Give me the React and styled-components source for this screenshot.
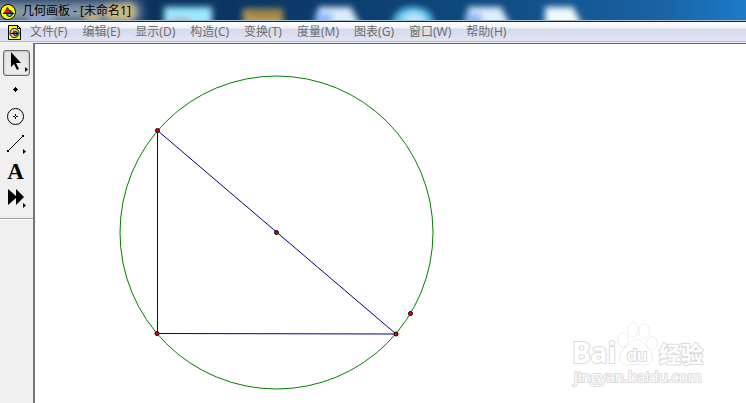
import { useState } from "react";
import styled, { createGlobalStyle } from "styled-components";

const GlobalStyle = createGlobalStyle`
  * {
    box-sizing: border-box;
  }

  body {
    margin: 0;
    font-family: "Noto Sans", "Noto Sans CJK SC", sans-serif;
    font-size: 12px;
  }
`;

const Window = styled.div`
  display: flex;
  flex-direction: column;
  min-height: 100vh;
  background: white;
`;

const TitleBar = styled.header`
  position: relative;
  display: flex;
  align-items: center;
  gap: 5px;
  height: 22px;
  overflow: hidden;
  background: linear-gradient(90deg, #0c2d55 0%, #0b3765 35%, #0f4a80 65%, #1a62a4 88%, #1e7ac6 100%);
  border-bottom: 1px solid #16263e;
  box-shadow: inset 0 -1px #a9bfd4;
`;

const Backdrop = styled.svg`
  position: absolute;
  top: 0;
  left: 0;
`;

const TitleIcon = styled.svg`
  position: relative;
  width: 17px;
  height: 20px;
`;

const Title = styled.h1`
  position: relative;
  margin: 0;
  font-size: 12px;
  font-weight: 400;
  line-height: 20px;
  color: black;
`;

const MenuBar = styled.nav`
  display: flex;
  align-items: center;
  gap: 1px;
  height: 21px;
  padding-left: 7px;
  background: linear-gradient(#fdfdfe 0, #f0f2f8 6px, #d5daeb 7px, #dfe3f4 18px);
  border-bottom: 1px solid #f1f1f1;
  box-shadow: inset 0 -1px #b6bccc;
`;

const MenuIcon = styled.svg`
  width: 15px;
  height: 17px;
`;

const MenuButton = styled.button`
  padding: 0 7px;
  border: none;
  background: none;
  font: inherit;
  line-height: 18px;
  color: #6d6d6d;
  white-space: nowrap;

  &:hover {
    color: black;
  }
`;

const Workspace = styled.main`
  display: flex;
  flex: 1;
`;

const Toolbox = styled.aside`
  width: 33px;
  background: #f0f0f0;
`;

const ToolList = styled.div`
  display: flex;
  flex-direction: column;
  align-items: flex-start;
  gap: 1px;
  padding: 7px 3px;
  border-bottom: 1px solid #a0a0a0;
  box-shadow: 0 1px white;
`;

const ToolButton = styled.button`
  width: 27px;
  height: 26px;
  padding: 0;
  border: 1px solid ${(props) => (props.$active ? "#686868" : "transparent")};
  border-radius: 3px;
  background: ${(props) => (props.$active ? "linear-gradient(#e2e2e2, #efefef)" : "none")};
  box-shadow: ${(props) => (props.$active ? "inset 0 0 2px #8a8a8a" : "none")};

  svg {
    display: block;
    overflow: visible;
  }
`;

const Sketch = styled.section`
  position: relative;
  flex: 1;
  border-top: 1px solid #646464;
  border-left: 2px solid #747474;
  background: white;
`;

const Drawing = styled.svg`
  display: block;
  width: 100%;
  height: 350px;
`;

const Watermark = styled.svg`
  position: absolute;
  right: 36px;
  bottom: 12px;
  width: 140px;
  height: 72px;
  font-family: "Open Sans", "Noto Sans CJK SC", sans-serif;
  fill: white;
  stroke: #dadada;
  paint-order: stroke;
`;

const menus = [
  "文件(F)",
  "编辑(E)",
  "显示(D)",
  "构造(C)",
  "变换(T)",
  "度量(M)",
  "图表(G)",
  "窗口(W)",
  "帮助(H)",
];

const tools = [
  {
    name: "选择箭头工具",
    icon: (
      <>
        <path d="M7 1v15l3-3 3 6 2-1-3-6h5z" />
        <path d="M21 16v5l3-2.500z" />
      </>
    ),
  },
  { name: "点工具", icon: <path d="M11 9h1v1h1v1h1v1h-1v1h-1v1h-1v-1h-1v-1h-1v-1h1v-1h1z" /> },
  {
    name: "圆规工具",
    icon: (
      <g fill="none" stroke="black">
        <circle cx="11.500" cy="11.500" r="8" />
        <path d="M9 11.500h2M12 11.500h2M11.500 9v2M11.500 12v2" />
      </g>
    ),
  },
  {
    name: "线段直尺工具",
    icon: (
      <>
        <path d="M4 19L19 4" stroke="black" />
        <path d="M3 18h2v2H3zM18 3h2v2h-2zM19 17v5l3-2.500z" />
      </>
    ),
  },
  {
    name: "文本工具",
    icon: (
      <text x="11.500" y="20" textAnchor="middle" fontFamily="Liberation Serif, serif" fontWeight="700" fontSize="23">
        A
      </text>
    ),
  },
  {
    name: "自定义工具",
    icon: <path d="M4 3l8 7V3l8 8-8 8v-7l-8 7zM19 17v5l3-2.500z" />,
  },
];

const points = [
  [122.5, 86.5],
  [122, 289.5],
  [361, 290],
  [375.5, 269.5],
  [241.5, 188.5],
];

const DesktopGlow = () => (
  <Backdrop width="746" height="20" aria-hidden="true">
    <defs>
      <filter id="soft" x="-20%" y="-60%" width="140%" height="220%">
        <feGaussianBlur stdDeviation="3" />
      </filter>
      <filter id="haze" x="-20%" y="-100%" width="140%" height="300%">
        <feGaussianBlur stdDeviation="6" />
      </filter>
    </defs>
    <rect x="-10" y="2" width="150" height="20" fill="#b4bbc3" opacity="0.8" filter="url(#haze)" />
    <g filter="url(#soft)">
      <path d="M86 14h14v8H86z" fill="#d8b574" />
      <path d="M104 6l28-3 4 8-4 10h-24z" fill="#cfb77b" />
      <path d="M28 16h26v6H28z" fill="#9eaeea" />
      <path d="M164 7h48v20h-48z" fill="#9be9ff" />
      <path d="M172 18h18v9h-18z" fill="#b7a3bb" />
      <path d="M243 9h40v18h-40z" fill="#c09c50" />
      <path d="M248 13h34v3h-34z" fill="#665a31" />
      <path d="M318 7h33l10 20h-43z" fill="#dcecff" />
      <path d="M315 13h17v14h-17z" fill="#8db9ff" />
      <ellipse cx="413" cy="21" rx="20" ry="14" fill="#58c6f1" />
      <ellipse cx="414" cy="20" rx="11" ry="8" fill="#b9e4fa" />
      <path d="M468 7h33l10 20h-43z" fill="#deefff" />
      <path d="M465 13h17v14h-17z" fill="#91b9f8" />
      <path d="M545 7h28l10 20h-38z" fill="#f0fbff" />
    </g>
  </Backdrop>
);

const App = () => {
  const [activeTool, setActiveTool] = useState(tools[0].name);

  return (
    <Window>
      <GlobalStyle />
      <TitleBar>
        <DesktopGlow />
        <TitleIcon viewBox="0 0 17 20" aria-hidden="true">
          <circle cx="8" cy="11" r="7.500" fill="#ffff00" stroke="black" />
          <circle cx="9.500" cy="12.500" r="3" fill="#20d0d8" stroke="black" />
          <path d="M7.500 6L4 12h7z" fill="#f01010" stroke="black" strokeWidth="0.500" />
          <path d="M3 12.500h11" stroke="black" />
        </TitleIcon>
        <Title>几何画板 - [未命名1]</Title>
      </TitleBar>
      <MenuBar>
        <MenuIcon viewBox="0 0 15 17" aria-hidden="true">
          <path d="M1.500 1.500h9l3 3v11h-12z" fill="#ffff00" stroke="black" />
          <path d="M10.500 1.500v3h3z" fill="white" stroke="black" />
          <circle cx="7.500" cy="9" r="4.500" fill="#d8d8c0" stroke="black" />
          <circle cx="8.500" cy="9.500" r="2" fill="#20c8d8" stroke="black" />
          <path d="M7 6L5 9h4z" fill="#c82020" />
          <path d="M4 9.500h7" stroke="black" />
        </MenuIcon>
        {menus.map((menu) => (
          <MenuButton key={menu}>{menu}</MenuButton>
        ))}
      </MenuBar>
      <Workspace>
        <Toolbox>
          <ToolList>
            {tools.map((tool) => (
              <ToolButton
                key={tool.name}
                aria-label={tool.name}
                $active={tool.name === activeTool}
                onClick={() => setActiveTool(tool.name)}
              >
                <svg width="25" height="24" viewBox="0 0 25 24">
                  {tool.icon}
                </svg>
              </ToolButton>
            ))}
          </ToolList>
        </Toolbox>
        <Sketch>
          <Drawing>
            <circle cx="241.500" cy="188.500" r="156.500" fill="none" stroke="#008000" />
            <path d="M122.500 290V87M122 289.500L361 290M122.500 86.500L361 290" fill="none" stroke="#000080" />
            {points.map(([x, y]) => (
              <circle key={`${x}-${y}`} cx={x} cy={y} r="2" fill="#f00000" stroke="black" />
            ))}
          </Drawing>
          <Watermark viewBox="0 0 140 72">
            <text x="2" y="44" fontSize="28" fontWeight="700" strokeWidth="2">
              Bai
            </text>
            <g strokeWidth="1">
              <ellipse cx="53" cy="21" rx="5" ry="7" />
              <ellipse cx="63" cy="11" rx="5" ry="7" />
              <ellipse cx="74" cy="12" rx="5" ry="7" />
              <ellipse cx="82" cy="24" rx="5" ry="6" />
              <path d="M67 21c6 0 8 6 12 10 5 5 4 14-4 15-4 0-5-1-9-1s-6 1-10 1c-8-1-8-10-3-15 5-4 8-10 14-10z" />
            </g>
            <text x="57" y="42" fontSize="16" fontWeight="600" strokeWidth="2">
              du
            </text>
            <text x="89" y="43" fontSize="22" fontWeight="700" strokeWidth="2">
              经验
            </text>
            <text x="4" y="63" fontSize="15" fontWeight="400" strokeWidth="2">
              jingyan.baidu.com
            </text>
          </Watermark>
        </Sketch>
      </Workspace>
    </Window>
  );
};

export default App;
